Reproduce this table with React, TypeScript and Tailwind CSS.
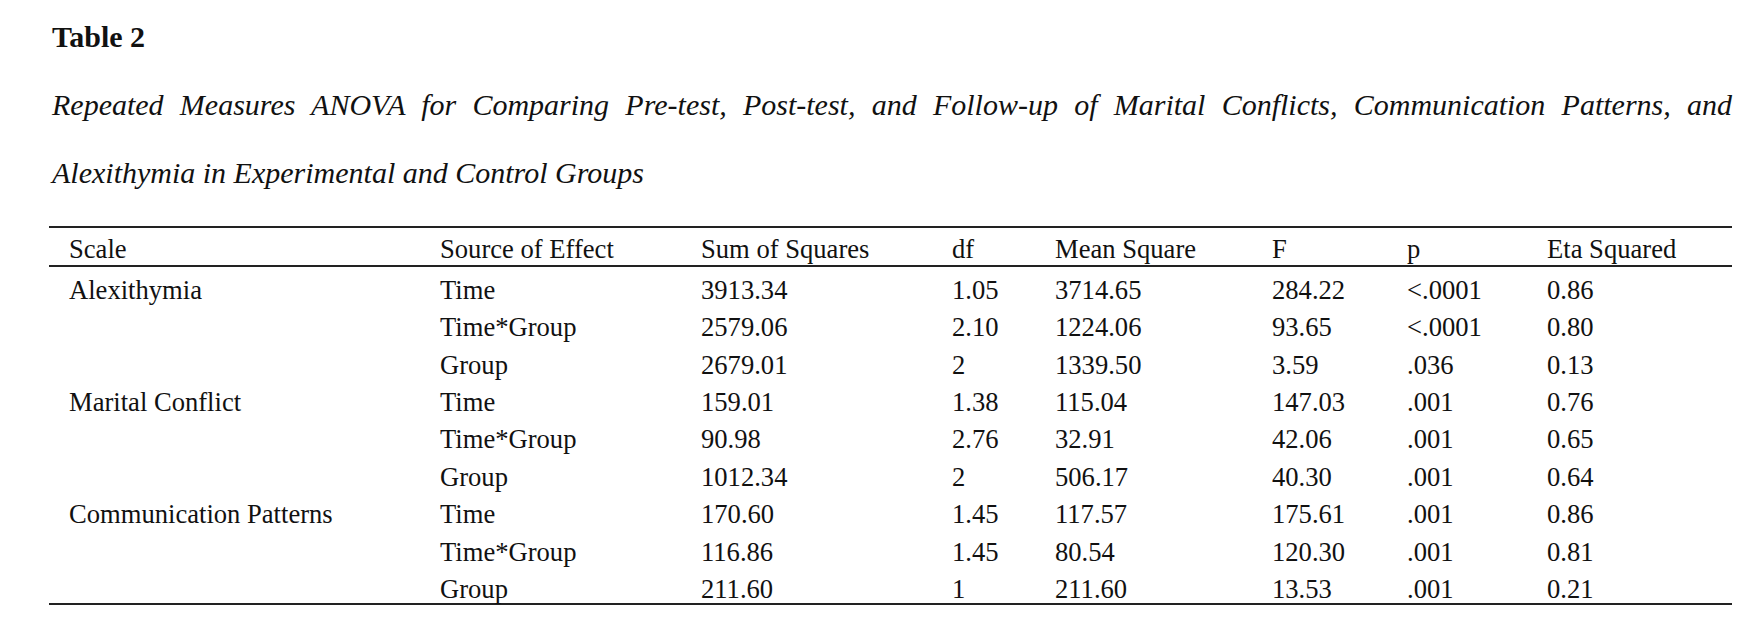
const rows = [
  { scale: "Alexithymia", source: "Time", ss: "3913.34", df: "1.05", ms: "3714.65", f: "284.22", p: "<.0001", eta: "0.86" },
  { scale: "", source: "Time*Group", ss: "2579.06", df: "2.10", ms: "1224.06", f: "93.65", p: "<.0001", eta: "0.80" },
  { scale: "", source: "Group", ss: "2679.01", df: "2", ms: "1339.50", f: "3.59", p: ".036", eta: "0.13" },
  { scale: "Marital Conflict", source: "Time", ss: "159.01", df: "1.38", ms: "115.04", f: "147.03", p: ".001", eta: "0.76" },
  { scale: "", source: "Time*Group", ss: "90.98", df: "2.76", ms: "32.91", f: "42.06", p: ".001", eta: "0.65" },
  { scale: "", source: "Group", ss: "1012.34", df: "2", ms: "506.17", f: "40.30", p: ".001", eta: "0.64" },
  { scale: "Communication Patterns", source: "Time", ss: "170.60", df: "1.45", ms: "117.57", f: "175.61", p: ".001", eta: "0.86" },
  { scale: "", source: "Time*Group", ss: "116.86", df: "1.45", ms: "80.54", f: "120.30", p: ".001", eta: "0.81" },
  { scale: "", source: "Group", ss: "211.60", df: "1", ms: "211.60", f: "13.53", p: ".001", eta: "0.21" },
];

const headers = ["Scale", "Source of Effect", "Sum of Squares", "df", "Mean Square", "F", "p", "Eta Squared"];

export default function App() {
  return (
    <div className="min-h-[637px] w-[1761px] bg-white pl-[49px] pt-[3px] text-[#111] font-['Liberation_Serif','Times_New_Roman',serif]">
      <div className="pl-[3px]">
        <div className="text-[30px] font-bold leading-[68px]">Table 2</div>
        <div className="w-[1680px] text-[30px] italic leading-[68px] text-justify [text-align-last:justify]">
          Repeated Measures ANOVA for Comparing Pre-test, Post-test, and Follow-up of Marital Conflicts, Communication Patterns, and
        </div>
        <div className="text-[30px] italic leading-[68px]">Alexithymia in Experimental and Control Groups</div>
      </div>

      <table className="mt-[19px] w-[1683px] table-fixed border-collapse text-[26.6px]">
        <colgroup>
          <col className="w-[371px]" />
          <col className="w-[261px]" />
          <col className="w-[251px]" />
          <col className="w-[103px]" />
          <col className="w-[217px]" />
          <col className="w-[135px]" />
          <col className="w-[140px]" />
          <col className="w-[205px]" />
        </colgroup>
        <thead>
          <tr className="border-t-2 border-b-2 border-[#222]">
            {headers.map((h) => (
              <th key={h} className="h-[37px] pl-[20px] pt-[6px] pb-0 text-left font-normal leading-[31px] whitespace-nowrap">
                {h}
              </th>
            ))}
          </tr>
        </thead>
        <tbody className="leading-[27px]">
          {rows.map((r, i) => (
            <tr key={i} className={i === rows.length - 1 ? "border-b-2 border-[#222]" : ""}>
              <td className="h-[37.4px] pl-[20px] pt-[10px] whitespace-nowrap">{r.scale}</td>
              <td className="pl-[20px] pt-[10px] whitespace-nowrap">{r.source}</td>
              <td className="pl-[20px] pt-[10px]">{r.ss}</td>
              <td className="pl-[20px] pt-[10px]">{r.df}</td>
              <td className="pl-[20px] pt-[10px]">{r.ms}</td>
              <td className="pl-[20px] pt-[10px]">{r.f}</td>
              <td className="pl-[20px] pt-[10px]">{r.p}</td>
              <td className="pl-[20px] pt-[10px]">{r.eta}</td>
            </tr>
          ))}
        </tbody>
      </table>
    </div>
  );
}
